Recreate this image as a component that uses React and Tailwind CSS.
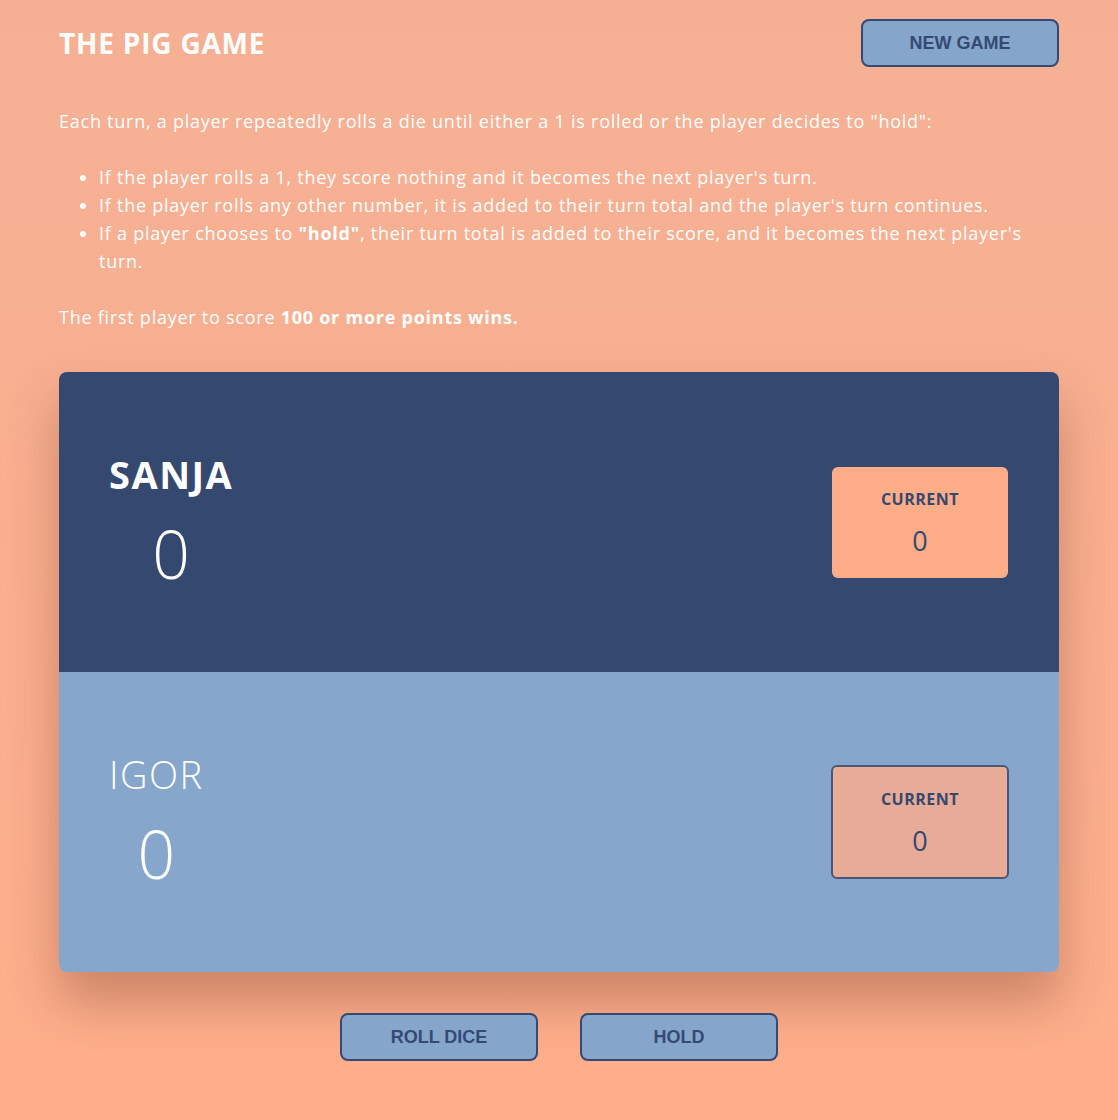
const font = { fontFamily: "'Open Sans', Lato, sans-serif" };

function PlayerRow({ name, score, current, active }) {
  return (
    <section
      className={`flex h-[300px] items-center justify-between px-[50px] ${
        active ? "bg-[#35486f]" : "bg-[#86a6cb]"
      }`}
    >
      <div className="flex flex-col items-center gap-4 text-white">
        <h2
          className={`text-[38px] leading-[46px] tracking-[1.5px] ${
            active ? "font-bold" : "font-light"
          }`}
        >
          {name}
        </h2>
        <p className="text-[66px] font-light leading-[80px]">{score}</p>
      </div>
      <div
        className={`flex flex-col items-center justify-center gap-5 rounded-md text-[#35486f] ${
          active
            ? "mx-px h-[111px] w-[176px] bg-[#fdad88]"
            : "h-[114px] w-[178px] border-2 border-[#4a5779] bg-[#e7ab97]"
        }`}
      >
        <p className="text-[16px] font-bold leading-none tracking-[0.5px]">CURRENT</p>
        <p className="text-[27px] leading-none">{current}</p>
      </div>
    </section>
  );
}

function Button({ children }) {
  return (
    <button
      className="h-12 w-[198px] rounded-lg border-2 border-[#344a74] bg-[#86a5ca] text-[18px] font-bold text-[#344a74]"
      style={{ fontFamily: "'Liberation Sans', Arial, sans-serif" }}
    >
      {children}
    </button>
  );
}

export default function App() {
  return (
    <div
      className="min-h-[1120px] bg-gradient-to-b from-[#f5b094] to-[#feae8a] text-white"
      style={font}
    >
      <div className="mx-auto w-[1000px] pb-14">
        <header className="flex items-center justify-between pt-[19px]">
          <h1 className="text-[28px] font-bold tracking-[0.8px]">THE PIG GAME</h1>
          <Button>NEW GAME</Button>
        </header>

        <div className="mt-[40px] text-[18px] leading-[28px] tracking-[0.75px]">
          <p>
            Each turn, a player repeatedly rolls a die until either a 1 is rolled
            or the player decides to "hold":
          </p>
          <ul className="mt-7 list-disc pl-10">
            <li>
              If the player rolls a 1, they score nothing and it becomes the next
              player's turn.
            </li>
            <li>
              If the player rolls any other number, it is added to their turn
              total and the player's turn continues.
            </li>
            <li>
              If a player chooses to <b>"hold"</b>, their turn total is added to
              their score, and it becomes the next player's turn.
            </li>
          </ul>
          <p className="mt-7">
            The first player to score <b>100 or more points wins.</b>
          </p>
        </div>

        <main className="mt-[41px] overflow-hidden rounded-lg shadow-[0_30px_50px_rgba(90,40,20,0.3)]">
          <PlayerRow name="SANJA" score="0" current="0" active />
          <PlayerRow name="IGOR" score="0" current="0" />
        </main>

        <div className="mt-[41px] flex justify-center gap-[42px]">
          <Button>ROLL DICE</Button>
          <Button>HOLD</Button>
        </div>
      </div>
    </div>
  );
}
